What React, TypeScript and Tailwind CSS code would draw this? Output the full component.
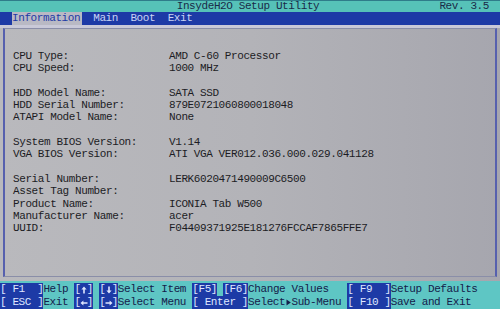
import React from "react";

const rows: ([string, string] | null)[] = [
  ["CPU Type:", "AMD C-60 Processor"],
  ["CPU Speed:", "1000 MHz"],
  null,
  ["HDD Model Name:", "SATA SSD"],
  ["HDD Serial Number:", "879E0721060800018048"],
  ["ATAPI Model Name:", "None"],
  null,
  ["System BIOS Version:", "V1.14"],
  ["VGA BIOS Version:", "ATI VGA VER012.036.000.029.041128"],
  null,
  ["Serial Number:", "LERK6020471490009C6500"],
  ["Asset Tag Number:", ""],
  ["Product Name:", "ICONIA Tab W500"],
  ["Manufacturer Name:", "acer"],
  ["UUID:", "F04409371925E181276FCCAF7865FFE7"],
];

type Seg = { t: React.ReactNode; k?: boolean };

const Arrow = ({ dir }: { dir: "up" | "down" | "left" | "right" }) => {
  const rot = { up: 0, right: 90, down: 180, left: 270 }[dir];
  return (
    <span className="inline-flex h-[13px] w-[6.2px] items-center justify-center align-top">
      <svg width="6" height="8" viewBox="0 0 6 8" style={{ transform: `rotate(${rot}deg)` }}>
        <path d="M3 0.5 L5.6 3.4 H3.8 V7.5 H2.2 V3.4 H0.4 Z" fill="currentColor" />
      </svg>
    </span>
  );
};

const Tri = () => (
  <span className="inline-flex h-[13px] w-[6.2px] items-center justify-center align-top">
    <svg width="5" height="7" viewBox="0 0 5 7">
      <path d="M0.5 0.5 L4.8 3.5 L0.5 6.5 Z" fill="currentColor" />
    </svg>
  </span>
);

const row1: Seg[] = [
  { t: "[ F1  ]", k: true },
  { t: "Help " },
  { t: <>[<Arrow dir="up" />]</>, k: true },
  { t: " " },
  { t: <>[<Arrow dir="down" />]</>, k: true },
  { t: "Select Item " },
  { t: "[F5]", k: true },
  { t: " " },
  { t: "[F6]", k: true },
  { t: "Change Values   " },
  { t: "[ F9  ]", k: true },
  { t: "Setup Defaults" },
];

const row2: Seg[] = [
  { t: "[ ESC ]", k: true },
  { t: "Exit " },
  { t: <>[<Arrow dir="left" />]</>, k: true },
  { t: " " },
  { t: <>[<Arrow dir="right" />]</>, k: true },
  { t: "Select Menu " },
  { t: "[ Enter ]", k: true },
  { t: <>Select<Tri />Sub-Menu </> },
  { t: "[ F10 ]", k: true },
  { t: "Save and Exit" },
];

function KeyRow({ segs }: { segs: Seg[] }) {
  return (
    <div className="flex h-[13px] items-stretch whitespace-pre leading-[13px]">
      {segs.map((s, i) => (
        <span
          key={i}
          className={s.k ? "bg-[#1d3aa6] text-[#dfe6ff]" : "text-[#15204a]"}
        >
          {s.t}
        </span>
      ))}
    </div>
  );
}

export default function App() {
  return (
    <div className="flex h-[309px] w-[500px] flex-col overflow-hidden bg-[#b4b4ba] font-['Liberation_Mono','DejaVu_Sans_Mono',monospace] text-[11px] tracking-[-0.4px]">
      {/* Title bar */}
      <div className="grid h-[12px] grid-cols-[1fr_auto_1fr] border-t border-[#2f7c8a] bg-[#56c2b8] leading-[11px] text-[#1a2a48]">
        <div />
        <div className="whitespace-pre pr-[4px]">InsydeH2O Setup Utility</div>
        <div className="justify-self-end whitespace-pre pr-[11px]">Rev. 3.5</div>
      </div>

      {/* Menu bar */}
      <div className="flex h-[13px] items-stretch whitespace-pre bg-[#1d3aa6] pl-[12px] leading-[13px] text-[#c9d2f4]">
        <span className="bg-[#b9b9c4] pr-[2px] text-[#1d3aa6]">Information</span>
        <span className="ml-[11px]">Main</span>
        <span className="ml-[12.4px]">Boot</span>
        <span className="ml-[12.4px]">Exit</span>
      </div>

      {/* Content panel */}
      <div className="h-[256px] border-t-[3px] border-[#c9c9d8] bg-linear-to-r from-[#b9b9bd] via-[#b3b3b8] to-[#a6a6ae] px-[3px] pb-[4px]">
        <div className="h-full border-y border-x-2 border-y-[#8a8ea8] border-x-[#5660ae] pl-[8px] pt-[21px] text-[#1c1c24]">
          {rows.map((r, i) =>
            r ? (
              <div key={i} className="flex h-[12.3px] items-center whitespace-pre leading-[12.3px]">
                <span className="w-[156px] shrink-0">{r[0]}</span>
                <span>{r[1]}</span>
              </div>
            ) : (
              <div key={i} className="h-[12.3px]" />
            )
          )}
        </div>
      </div>

      {/* Bottom key bar */}
      <div className="h-[28px] bg-[#5ec6c4] pt-[2px]">
        <KeyRow segs={row1} />
        <KeyRow segs={row2} />
      </div>
    </div>
  );
}
